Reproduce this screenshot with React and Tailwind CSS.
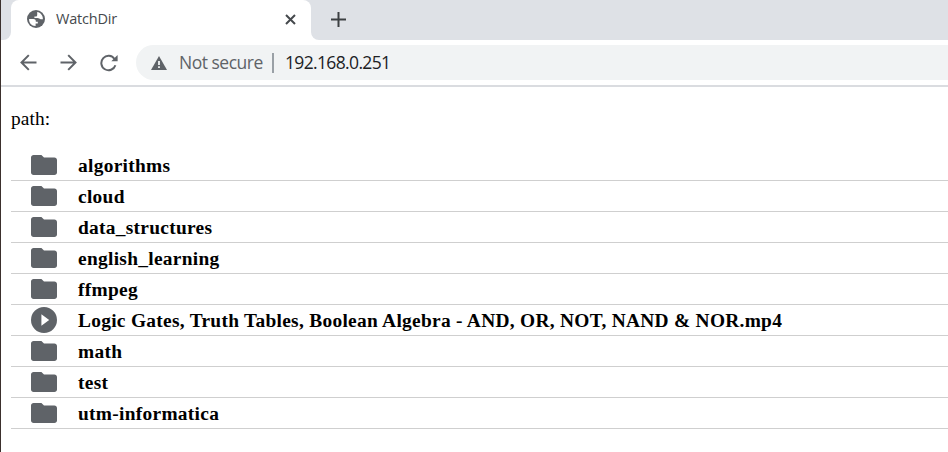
const files = [
  "algorithms",
  "cloud",
  "data_structures",
  "english_learning",
  "ffmpeg",
  "Logic Gates, Truth Tables, Boolean Algebra - AND, OR, NOT, NAND & NOR.mp4",
  "math",
  "test",
  "utm-informatica",
];

function FolderIcon() {
  return (
    <svg className="h-5 w-[26px] shrink-0 fill-[#5f6368]" viewBox="2 4 20 16" preserveAspectRatio="none">
      <path d="M10 4H4c-1.1 0-2 .9-2 2v12c0 1.1.9 2 2 2h16c1.1 0 2-.9 2-2V8c0-1.1-.9-2-2-2h-8z" />
    </svg>
  );
}

function PlayIcon() {
  return (
    <svg className="size-[26px] shrink-0 fill-[#5f6368]" viewBox="2 2 20 20">
      <path fillRule="evenodd" d="M12 2a10 10 0 1 0 0 20 10 10 0 0 0 0-20zM10 16.5v-9l6 4.5z" />
    </svg>
  );
}

function GlobeIcon() {
  return (
    <svg className="size-[18px]" viewBox="0 0 18 18">
      <circle cx="9" cy="9" r="9" fill="#5f6368" />
      <path
        d="M2.1 8.9h4.2c1.6 0 2.5.8 2.5 2.2v.7h2v1.8H8.6v2.3C4.9 16.1 1.8 13 2.1 8.9z"
        fill="#fff"
      />
      <path
        d="M10.2 2.1c3.4.5 5.8 3.5 5.7 7.2h-2.1c-.6 0-1-.4-1.5-.8-.5-.4-1-.6-1.8-.6H7.4V6.6h1.4c1 0 1.4-.6 1.4-1.5V4.4z"
        fill="#fff"
      />
    </svg>
  );
}

function TabStrip() {
  return (
    <div className="flex h-10 bg-[#dee1e6]">
      <div className="flex w-2.5 bg-white">
        <div className="flex-1 rounded-br-lg bg-[#dee1e6]" />
      </div>
      <div className="flex w-[300px] items-center rounded-t-lg bg-white pb-[2px] pl-4 pr-[15px] text-[#45494d]">
        <GlobeIcon />
        <span className="ml-[11px] flex-1 font-['Open_Sans',sans-serif] text-[14.5px] tracking-[-0.2px]">WatchDir</span>
        <svg className="size-[11px]" viewBox="0 0 11 11" stroke="currentColor" strokeWidth="2">
          <path d="M1 1l9 9M10 1l-9 9" />
        </svg>
      </div>
      <div className="flex flex-1 bg-white">
        <div className="flex flex-1 items-center rounded-bl-lg bg-[#dee1e6] pb-[2px] pl-5">
          <svg className="size-[15px]" viewBox="0 0 15 15" stroke="#3c4043" strokeWidth="2">
            <path d="M7.5 0v15M0 7.5h15" />
          </svg>
        </div>
      </div>
    </div>
  );
}

function Toolbar() {
  return (
    <div className="flex h-[47px] items-center border-b-2 border-[#dadce0] pl-[19px]">
      <svg className="size-[17px]" viewBox="0 0 17 17" fill="none" stroke="#5f6368" strokeWidth="2">
        <path d="M16.5 8.5H1.8M8.8 1.1L1.5 8.5l7.3 7.4" />
      </svg>
      <svg className="ml-[23px] size-[17px]" viewBox="0 0 17 17" fill="none" stroke="#5f6368" strokeWidth="2">
        <path d="M.5 8.5h14.7M8.2 1.1l7.3 7.4-7.3 7.4" />
      </svg>
      <svg className="ml-[23px] size-[18px]" viewBox="0 0 18 18" fill="none" stroke="#5f6368" strokeWidth="2">
        <path d="M14.5 5A7.2 7.2 0 1 0 15.4 11.2" />
        <path d="M17.6 1v6.3h-6.3z" fill="#5f6368" stroke="none" />
      </svg>
      <div className="ml-[18px] flex h-[35px] flex-1 items-center rounded-l-full bg-[#f1f3f4] pl-[15px] font-['Open_Sans',sans-serif] text-[18px]">
        <svg className="h-[14px] w-4" viewBox="0 0 16 14">
          <path d="M8 0l8 14H0z" fill="#5f6368" />
          <path d="M7.1 5h1.8v4H7.1zM7.1 10.3h1.8v1.8H7.1z" fill="#f1f3f4" />
        </svg>
        <span className="ml-3 w-[93px] whitespace-nowrap text-[17.5px] tracking-[-0.5px] text-[#5f6368]">Not secure</span>
        <span className="h-5 w-[2px] bg-[#9aa0a6]" />
        <span className="ml-[11px] text-[17.5px] tracking-[-0.65px] text-[#202124]">192.168.0.251</span>
      </div>
    </div>
  );
}

export default function App() {
  return (
    <div className="h-[452px] w-[948px] overflow-hidden border-l border-[#3b302d] bg-white">
      <TabStrip />
      <Toolbar />
      <main className="pl-2.5 font-['Liberation_Serif',serif] text-[19.4px] leading-[23px] text-black">
        <p className="my-5 tracking-[0.1px]">path:</p>
        <ul>
          {files.map((name) => (
            <li key={name} className="flex h-[31px] items-center border-b border-[#cfcfcf] pl-5 font-bold">
              {name.endsWith(".mp4") ? <PlayIcon /> : <FolderIcon />}
              <span className="ml-[21px] whitespace-nowrap tracking-[0.29px]">{name}</span>
            </li>
          ))}
        </ul>
      </main>
    </div>
  );
}
